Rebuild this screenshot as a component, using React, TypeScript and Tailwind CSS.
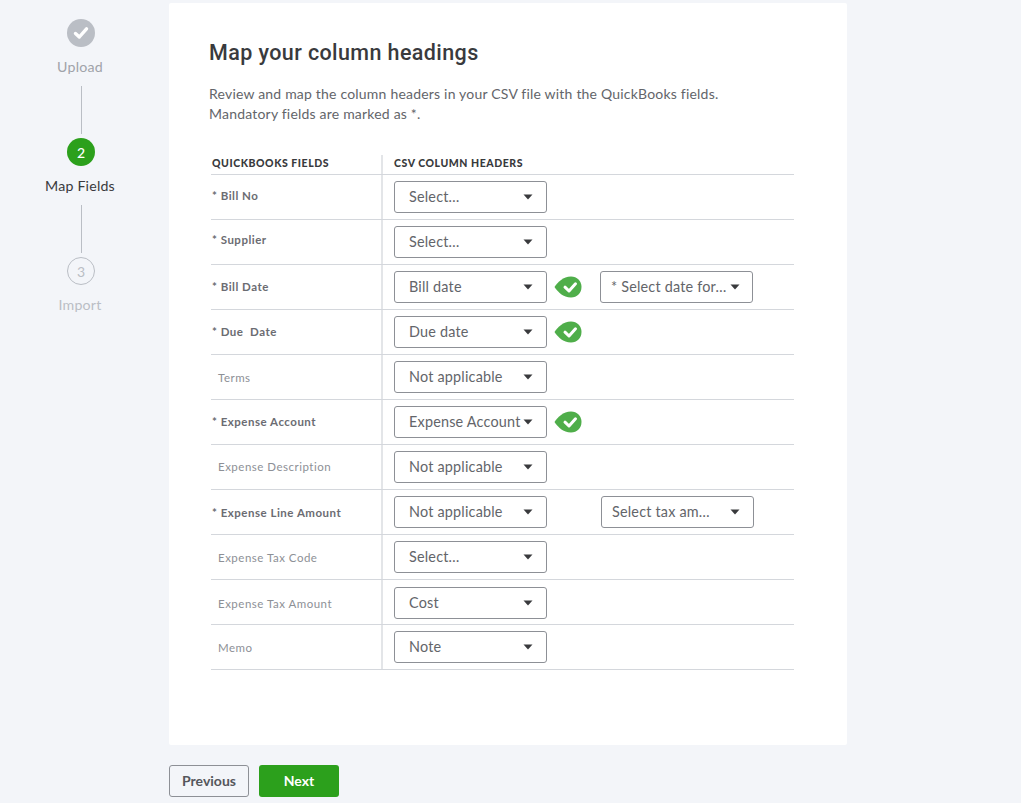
import React from "react";

function Caret() {
  return (
    <svg width="10" height="6" viewBox="0 0 10 6" className="shrink-0">
      <path d="M0.5 0.5H9.5L5 5.5Z" fill="#393a3d" />
    </svg>
  );
}

function Drop() {
  return (
    <svg width="28" height="22" viewBox="0 0 28 22" className="shrink-0">
      <path d="M0.5 11C4 6 9 0.5 17 0.5C23 0.5 27.5 5 27.5 11C27.5 17 23 21.5 17 21.5C9 21.5 4 16 0.5 11Z" fill="#4fae4a" />
      <path d="M11 11.2L15 15L21.5 7.8" fill="none" stroke="#fff" strokeWidth="3" strokeLinecap="round" strokeLinejoin="round" />
    </svg>
  );
}

function Select({ value, w = "w-[153px]", pl = "pl-[14px]", pr = "pr-[13px]" }: { value: string; w?: string; pl?: string; pr?: string }) {
  return (
    <div className={`${w} ${pl} ${pr} h-[32px] shrink-0 flex items-center justify-between border border-[#8d9096] rounded-[3px] bg-white text-[14.4px] text-[#63656a] tracking-[0.2px] whitespace-nowrap`}>
      <span>{value}</span>
      <Caret />
    </div>
  );
}

type Row = { label: string; req?: boolean; value: string; ok?: boolean; extra?: React.ReactNode; nudge: string; sel?: string };

const rows: Row[] = [
  { label: "* Bill No", req: true, value: "Select…", nudge: "pb-[2px]" },
  { label: "* Supplier", req: true, value: "Select…", nudge: "pb-[4px]" },
  {
    label: "* Bill Date",
    req: true,
    value: "Bill date",
    ok: true,
    nudge: "pt-0",
    extra: <div className="ml-[18px]"><Select value="* Select date for…" pl="pl-[10px]" pr="pr-[12px]" /></div>,
  },
  { label: "* Due  Date", req: true, value: "Due date", ok: true, nudge: "pt-0" },
  { label: "Terms", value: "Not applicable", nudge: "pt-[2px]" },
  { label: "* Expense Account", req: true, value: "Expense Account", ok: true, nudge: "pt-0" },
  { label: "Expense Description", value: "Not applicable", nudge: "pt-0" },
  {
    label: "* Expense Line Amount",
    req: true,
    value: "Not applicable",
    nudge: "pt-[2px]",
    extra: <div className="ml-[54px]"><Select value="Select tax am…" pl="pl-[10px]" /></div>,
  },
  { label: "Expense Tax Code", value: "Select…", nudge: "pt-[2px]" },
  { label: "Expense Tax Amount", value: "Cost", nudge: "pt-[4px]", sel: "pt-[2px]" },
  { label: "Memo", value: "Note", nudge: "pt-[2px]" },
];

function Step({ circle, label, labelCls }: { circle: React.ReactNode; label: string; labelCls: string }) {
  return (
    <div className="flex flex-col items-center">
      {circle}
      <div className={`mt-[10px] pr-[2px] h-[20px] leading-[20px] text-[14.2px] tracking-[0.2px] ${labelCls}`}>{label}</div>
    </div>
  );
}

function Line() {
  return <div className="w-px h-[48px] bg-[#babec5] mt-[9px] mb-[4px] ml-[1px]" />;
}

export default function App() {
  return (
    <div className="h-[803px] w-[1021px] overflow-hidden bg-[#f3f5f9] flex font-['Lato','Noto_Sans',sans-serif]">
      <aside className="w-[169px] shrink-0 pt-[19px] pr-[7px] flex flex-col items-center">
        <Step
          labelCls="text-[#a0a3a9]"
          label="Upload"
          circle={
            <div className="w-[28px] h-[28px] rounded-full bg-[#babec5] flex items-center justify-center">
              <svg width="16" height="14" viewBox="0 0 16 14">
                <path d="M2.5 7.5L6.3 11L13.5 2.8" fill="none" stroke="#fff" strokeWidth="3.4" strokeLinecap="round" strokeLinejoin="round" />
              </svg>
            </div>
          }
        />
        <Line />
        <Step
          labelCls="text-[#393a3d]"
          label="Map Fields"
          circle={
            <div className="w-[28px] h-[28px] rounded-full bg-[#2ca01c] flex items-center justify-center text-white text-[14px] font-medium">2</div>
          }
        />
        <Line />
        <Step
          labelCls="text-[#babec5]"
          label="Import"
          circle={
            <div className="w-[28px] h-[28px] rounded-full border border-[#babec5] flex items-center justify-center text-[#babec5] text-[14px]">3</div>
          }
        />
      </aside>
      <main className="w-[678px] shrink-0 pt-[3px]">
        <section className="h-[742px] bg-white rounded-[2px] pt-[37px] pl-[40px] pr-[53px]">
          <h1 className="text-[21.5px] leading-[26px] font-medium text-[#393a3d] font-['Roboto',sans-serif] tracking-[0.4px]">Map your column headings</h1>
          <p className="mt-[18px] text-[14px] leading-[20px] text-[#63656a] tracking-[0.2px]">
            Review and map the column headers in your CSV file with the QuickBooks fields.
            <br />
            Mandatory fields are marked as *.
          </p>
          <div className="mt-[31px] ml-[2px]">
            <div className="flex h-[20px] border-b border-[#d4d7dc] text-[10.5px] tracking-[0.55px] font-black text-[#393a3d] leading-[16px]">
              <div className="w-[172px] pl-[1px] border-r-2 border-[#e3e5e8]">QUICKBOOKS FIELDS</div>
              <div className="pl-[11px]">CSV COLUMN HEADERS</div>
            </div>
            {rows.map((r) => (
              <div key={r.label} className="flex h-[45px] border-b border-[#d4d7dc]">
                <div className={`w-[172px] flex items-center border-r-2 border-[#e3e5e8] text-[11.5px] tracking-[0.5px] whitespace-pre ${r.nudge} ${r.req ? "pl-[1px] font-bold text-[#6b6c72]" : "pl-[7px] text-[#8d9096]"}`}>
                  {r.label}
                </div>
                <div className={`pl-[11px] flex items-center ${r.sel ?? ""}`}>
                  <Select value={r.value} />
                  {r.ok && <div className="ml-[7px]"><Drop /></div>}
                  {r.extra}
                </div>
              </div>
            ))}
          </div>
        </section>
        <div className="mt-[20px] flex gap-[10px]">
          <button className="w-[80px] h-[32px] pb-[2px] rounded-[3px] border border-[#8d9096] text-[14px] font-bold text-[#55575c]">Previous</button>
          <button className="w-[80px] h-[32px] pb-[2px] rounded-[3px] bg-[#2ca01c] text-[14px] font-bold text-white">Next</button>
        </div>
      </main>
    </div>
  );
}
